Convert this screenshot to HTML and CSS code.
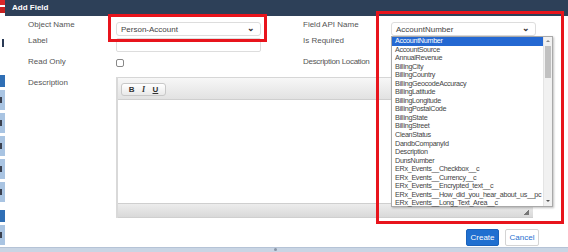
FILE: index.html
```html
<!DOCTYPE html>
<html>
<head>
<meta charset="utf-8">
<link rel="stylesheet" href="styles.css">
</head>
<body>
<div class="page">
  <div class="bgstrip">
    <div class="logo"></div>
    <div class="sp1"></div>
    <div class="dk"></div>
    <div class="sp2"></div>
    <div class="bl1"></div>
    <div class="lb"><span class="mk"></span></div>
    <div class="lb"><span class="mk"></span></div>
    <div class="lb"><span class="mk"></span></div>
    <div class="lb"><span class="mk"></span></div>
    <div class="lb"><span class="mk"></span></div>
    <div class="sp3"></div>
    <div class="bl2"></div>
    <div class="lb"><span class="mk"></span></div>
  </div>
  <div class="dialog">
    <div class="header">Add Field</div>
    <div class="content">
      <div class="form">
        <div class="lbl">Object Name</div>
        <div class="select sel-left"><span>Person-Account</span><span class="chev">&#8964;</span></div>
        <div></div>
        <div class="lbl">Field API Name</div>
        <div class="select sel-right"><span>AccountNumber</span><span class="chev">&#8964;</span></div>

        <div class="lbl">Label</div>
        <div class="input"></div>
        <div></div>
        <div class="lbl">Is Required</div>
        <div></div>

        <div class="lbl">Read Only</div>
        <div><div class="checkbox"></div></div>
        <div></div>
        <div class="lbl tight">Description Location</div>
        <div></div>

        <div class="lbl lbl-desc">Description</div>
        <div class="editor">
          <div class="toolbar">
            <div class="btngroup">
              <span class="tb b">B</span><span class="tb i">I</span><span class="tb u">U</span>
            </div>
          </div>
          <div class="edbody"></div>
          <div class="edfoot"><span class="grip"></span></div>
        </div>
      </div>
      <div class="footer">
        <button class="btn create">Create</button>
        <button class="btn cancel">Cancel</button>
      </div>
    </div>
    <div class="redbox red-left"></div>
    <div class="redbox red-right"></div>
    <div class="dropdown">
      <ul class="opts">
        <li class="sel">AccountNumber</li>
        <li>AccountSource</li>
        <li>AnnualRevenue</li>
        <li>BillingCity</li>
        <li>BillingCountry</li>
        <li>BillingGeocodeAccuracy</li>
        <li>BillingLatitude</li>
        <li>BillingLongitude</li>
        <li>BillingPostalCode</li>
        <li>BillingState</li>
        <li>BillingStreet</li>
        <li>CleanStatus</li>
        <li>DandbCompanyId</li>
        <li>Description</li>
        <li>DunsNumber</li>
        <li>ERx_Events__Checkbox__c</li>
        <li>ERx_Events__Currency__c</li>
        <li>ERx_Events__Encrypted_text__c</li>
        <li>ERx_Events__How_did_you_hear_about_us__pc</li>
        <li>ERx_Events__Long_Text_Area__c</li>
      </ul>
      <div class="scroll">
        <div class="arr up"></div>
        <div class="track"><div class="thumb"></div></div>
        <div class="arr down"></div>
      </div>
    </div>
  </div>
</div>
<div class="bottomstrip"><span class="dot"></span></div>
</body>
</html>
```

FILE: styles.css
```css
* { box-sizing: border-box; }
html, body {
  margin: 0;
  padding: 0;
  width: 568px;
  height: 252px;
  overflow: hidden;
  background: #c9d5e4;
  font-family: "Liberation Sans", Arial, sans-serif;
  font-size: 8px;
  color: #555;
}
.page {
  display: flex;
  height: 247px;
}
.bgstrip {
  width: 5px;
  flex: none;
  background: #fff;
  display: flex;
  flex-direction: column;
  overflow: hidden;
}
.bgstrip .logo { height: 13px; background: linear-gradient(#d8282a 0 40%, #fff 40% 55%, #c62020 55%); }
.bgstrip .sp1 { height: 26px; background: #fff; }
.bgstrip .dk { height: 8px; width: 2px; margin-left: 2px; background: #2a3a55; }
.bgstrip .sp2 { height: 28px; }
.bgstrip .bl1 { height: 12px; background: #2f6fb5; }
.bgstrip .lb {
  height: 20px;
  margin-top: 3px;
  background: #a9c4e2;
  display: flex;
  align-items: center;
}
.bgstrip .mk {
  width: 2px;
  height: 6px;
  background: #3b4150;
}
.bgstrip .sp3 { height: 8px; }
.bgstrip .bl2 { height: 12px; background: #2f6fb5; }
.dialog {
  flex: 1;
  position: relative;
  display: flex;
  flex-direction: column;
  background: #fff;
}
.header {
  height: 16px;
  background: #2d4058;
  color: #fff;
  font-weight: bold;
  font-size: 8px;
  line-height: 16px;
  padding-left: 7px;
}
.content {
  flex: 1;
  display: flex;
  flex-direction: column;
}
.form {
  display: grid;
  grid-template-columns: 88px 145px 42px 88px 145px;
  grid-template-rows: 16px 21px 18px auto;
  padding: 6px 0 0 23px;
}
.lbl {
  line-height: 10px;
  margin-top: -2px;
  color: #555;
  white-space: nowrap;
}
.lbl.tight { letter-spacing: -0.3px; }
.lbl-desc { margin-top: 1px; }
.select {
  height: 14px;
  border: 1px solid #ddd;
  border-radius: 3px;
  display: flex;
  align-items: center;
  justify-content: space-between;
  padding: 0 5px 0 4px;
  color: #444;
  background: #fff;
}
.chev {
  font-size: 9px;
  line-height: 6px;
  height: 9px;
  color: #333;
  font-weight: bold;
}
.input {
  height: 14px;
  border: 1px solid #ddd;
  border-radius: 2px;
}
.checkbox {
  width: 8px;
  height: 8px;
  border: 1px solid #888;
  border-radius: 2px;
}
.editor {
  grid-column: 2 / 6;
  width: 417px;
  display: flex;
  flex-direction: column;
  border-left: 2px solid #d9d9d9;
}
.toolbar {
  height: 23px;
  background: linear-gradient(#f7f7f7, #e2e2e2);
  border-top: 1px solid #d6d6d6;
  border-bottom: 1px solid #cfcfcf;
  padding: 5px 0 0 3px;
}
.btngroup {
  display: inline-flex;
  height: 13px;
  width: 45px;
  border: 1px solid #c8c8c8;
  border-radius: 3px;
  background: linear-gradient(#fff, #e9e9e9);
  align-items: center;
  justify-content: space-around;
  padding: 0 3px;
}
.tb { font-size: 8px; color: #333; font-weight: bold; }
.tb.i { font-style: italic; font-family: "Liberation Serif", serif; }
.tb.u { text-decoration: underline; }
.edbody { height: 103px; background: #fff; }
.edfoot {
  height: 15px;
  background: linear-gradient(#ececec, #d9d9d9);
  border-top: 1px solid #cfcfcf;
  border-bottom: 1px solid #cfcfcf;
  position: relative;
}
.grip {
  position: absolute;
  right: 4px;
  bottom: 2px;
  width: 5px;
  height: 5px;
  background: linear-gradient(135deg, transparent 50%, #777 50%);
}
.footer {
  display: flex;
  justify-content: flex-end;
  gap: 6px;
  padding: 11px 29px 0 0;
}
.btn {
  height: 17px;
  font-family: "Liberation Sans", Arial, sans-serif;
  font-size: 8px;
  border-radius: 2px;
  padding: 0;
}
.create {
  width: 33px;
  background: #1f6fd0;
  border: 1px solid #1a62bb;
  color: #fff;
}
.cancel {
  width: 34px;
  background: #fff;
  border: 1px solid #d4d4d4;
  color: #1f6fd0;
}
.redbox {
  position: absolute;
  border: 3px solid #e8141c;
  pointer-events: none;
}
.red-left { left: 103px; top: 14px; width: 159px; height: 28px; }
.red-right { left: 371px; top: 11px; width: 188px; height: 213px; }
.dropdown {
  position: absolute;
  left: 386px;
  top: 36px;
  width: 162px;
  height: 171px;
  border: 1px solid #a9a9a9;
  background: #fff;
  display: flex;
  box-shadow: 1px 1px 2px rgba(0,0,0,0.25);
}
.opts {
  list-style: none;
  margin: 0;
  padding: 0;
  flex: 1;
  min-width: 0;
}
.opts li {
  height: 8.55px;
  line-height: 8.55px;
  padding-left: 3px;
  color: #444;
  white-space: nowrap;
  font-size: 7.2px;
  letter-spacing: -0.3px;
}
.opts li.sel { background: #2468d2; color: #fff; }
.scroll {
  width: 9px;
  flex: none;
  background: #f1f1f1;
  display: flex;
  flex-direction: column;
  border-left: 1px solid #e4e4e4;
}
.arr { height: 9px; position: relative; }
.arr::after {
  content: "";
  position: absolute;
  left: 2px;
  top: 3px;
  border-left: 2px solid transparent;
  border-right: 2px solid transparent;
}
.arr.up::after { border-bottom: 2px solid #888; }
.arr.down::after { border-top: 2px solid #555; }
.track { flex: 1; }
.thumb { height: 32px; margin: 0 1px; background: #c1c1c1; }
.bottomstrip {
  height: 5px;
  border-top: 1px solid #b5c3d6;
  background: #c9d5e4;
  position: relative;
}
.dot {
  position: absolute;
  left: 274px;
  top: 0;
  width: 3px;
  height: 3px;
  border-radius: 50%;
  background: #8a96a8;
}
```
